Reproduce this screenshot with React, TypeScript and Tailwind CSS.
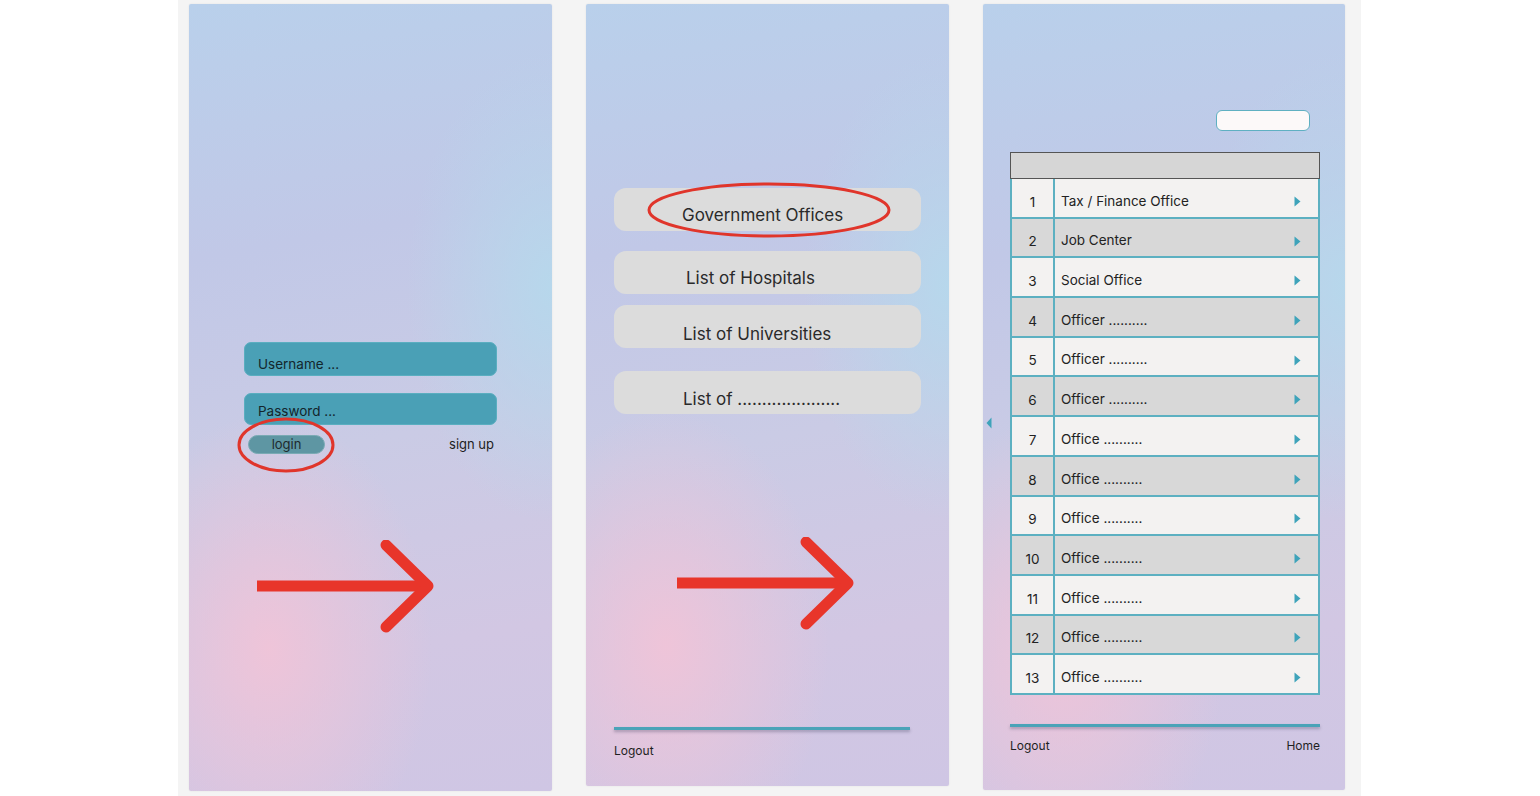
import React from "react";

const panelBg =
  "bg-[radial-gradient(ellipse_45%_30%_at_22%_82%,rgba(240,196,216,0.95),rgba(240,196,216,0)_100%),radial-gradient(ellipse_40%_30%_at_100%_36%,rgba(182,216,236,0.95),rgba(182,216,236,0)_100%),linear-gradient(170deg,#b9d0eb_0%,#c1c8e7_30%,#cacbe5_55%,#d2c7e3_80%,#cfc6e4_100%)]";

function Arrow({ className }: { className: string }) {
  return (
    <svg className={className} width="190" height="100" viewBox="0 0 190 100">
      <line x1="0" y1="46" x2="172" y2="46" stroke="#e8352a" strokeWidth="11" />
      <polyline
        points="129,5 171,46 129,87"
        fill="none"
        stroke="#e8352a"
        strokeWidth="11"
        strokeLinecap="round"
        strokeLinejoin="round"
      />
    </svg>
  );
}

function RightTri() {
  return (
    <svg width="7" height="11" viewBox="0 0 7 11">
      <path d="M0.5 0.5 L6.5 5.5 L0.5 10.5 Z" fill="#3ea3ba" />
    </svg>
  );
}

const rows = [
  "Tax / Finance Office",
  "Job Center",
  "Social Office",
  "Officer ..........",
  "Officer ..........",
  "Officer ..........",
  "Office ..........",
  "Office ..........",
  "Office ..........",
  "Office ..........",
  "Office ..........",
  "Office ..........",
  "Office ..........",
];

export default function App() {
  return (
    <div
      className="w-[1540px] h-[796px] bg-white flex overflow-hidden text-[#222]"
      style={{ fontFamily: "Inter, 'Liberation Sans', sans-serif" }}
    >
      <div className="ml-[178px] w-[1183px] h-[796px] bg-[#f4f4f4] flex items-start pl-[11px] pt-[4px] gap-[34px]">
        {/* Panel 1 */}
        <div className={`relative w-[363px] h-[787px] rounded-[2px] shadow-[0_0_2px_rgba(0,0,0,0.08)] ${panelBg}`}>
          <div className="ml-[55px] mt-[338px] w-[253px] flex flex-col">
            <div className="h-[34px] rounded-[7px] bg-[#4aa0b6] border border-[#5aaec0] flex items-end pb-[1px] pl-[13px] text-[13.5px] text-[#13262c]">
              Username ...
            </div>
            <div className="mt-[17px] h-[32px] rounded-[7px] bg-[#4aa0b6] border border-[#5aaec0] flex items-end pb-[3px] pl-[13px] text-[13.5px] text-[#13262c]">
              Password ...
            </div>
            <div className="mt-[10px] flex items-center justify-between">
              <div className="ml-[4px] w-[77px] h-[19px] rounded-full bg-[#5e96a3] border border-[#7aaab4] flex items-center justify-center text-[13px] text-[#1d2a2e]">
                login
              </div>
              <span className="mr-[3px] text-[13px] text-[#1d1d1d]">sign up</span>
            </div>
          </div>
          <svg className="absolute left-[47px] top-[413px]" width="100" height="60" viewBox="0 0 100 60">
            <ellipse cx="50" cy="28" rx="47" ry="26" fill="none" stroke="#e0352b" strokeWidth="3" />
          </svg>
          <Arrow className="absolute left-[68px] top-[536px]" />
        </div>

        {/* Panel 2 */}
        <div className={`relative w-[363px] h-[782px] rounded-[2px] shadow-[0_0_2px_rgba(0,0,0,0.08)] flex flex-col ${panelBg}`}>
          <div className="ml-[28px] mt-[184px] w-[307px] flex flex-col text-[17px] text-[#2a2a2a]">
            <div className="h-[43px] rounded-[12px] bg-[#dcdcdc] flex items-center pl-[68px] pt-[12px]">
              Government Offices
            </div>
            <div className="mt-[20px] h-[43px] rounded-[12px] bg-[#dcdcdc] flex items-center pl-[72px] pt-[12px]">
              List of Hospitals
            </div>
            <div className="mt-[11px] h-[43px] rounded-[12px] bg-[#dcdcdc] flex items-center pl-[69px] pt-[16px]">
              List of Universities
            </div>
            <div className="mt-[23px] h-[43px] rounded-[12px] bg-[#dcdcdc] flex items-center pl-[69px] pt-[15px]">
              List of .....................
            </div>
          </div>
          <div className="mt-auto mb-[26px] ml-[28px] w-[296px] flex flex-col">
            <div className="h-[3px] bg-[#4aa3b8] shadow-[0_2px_3px_rgba(60,60,90,0.35)]" />
            <span className="mt-[12px] text-[12px] text-[#1f1f1f]">Logout</span>
          </div>
          <svg className="absolute left-[60px] top-[177px]" width="250" height="60" viewBox="0 0 250 60">
            <ellipse cx="123" cy="29" rx="120" ry="26" fill="none" stroke="#e0352b" strokeWidth="3" />
          </svg>
          <Arrow className="absolute left-[91px] top-[533px]" />
        </div>

        {/* Panel 3 */}
        <div className={`relative w-[362px] h-[786px] rounded-[2px] shadow-[0_0_2px_rgba(0,0,0,0.08)] flex flex-col ${panelBg}`}>
          <div className="mt-[106px] self-end mr-[35px] w-[94px] h-[21px] rounded-[6px] bg-[#fcf9f9] border border-[#5fb0c2]" />
          <div className="relative flex items-center mt-[21px]">
            <svg className="ml-[3px] mr-[18px]" width="6" height="12" viewBox="0 0 6 12">
              <path d="M5.5 0.5 L0.5 6 L5.5 11.5 Z" fill="#3ea3ba" />
            </svg>
            <div className="w-[310px] flex flex-col">
              <div className="h-[27px] bg-[#d6d6d6] border-[1.5px] border-[#555]" />
              {rows.map((r, i) => (
                <div
                  key={i}
                  className={`h-[39.7px] flex border-x-2 border-b-2 border-[#5cb0c1] text-[13.5px] text-[#222] ${
                    i % 2 === 0 ? "bg-[#f3f2f1]" : "bg-[#d8d8d8]"
                  }`}
                >
                  <div className="w-[43px] border-r-2 border-[#5cb0c1] flex items-center justify-center pt-[8px]">
                    {i + 1}
                  </div>
                  <div className="flex-1 flex items-center pl-[6px] pr-[17px] pt-[6px]">
                    <span className="flex-1">{r}</span>
                    <span className="pt-[1px]">
                      <RightTri />
                    </span>
                  </div>
                </div>
              ))}
            </div>
          </div>
          <div className="mt-auto mb-[35px] ml-[27px] w-[310px] flex flex-col">
            <div className="h-[3px] bg-[#4aa3b8] shadow-[0_2px_3px_rgba(60,60,90,0.35)]" />
            <div className="mt-[10px] flex justify-between text-[12px] text-[#1f1f1f]">
              <span>Logout</span>
              <span>Home</span>
            </div>
          </div>
        </div>
      </div>
    </div>
  );
}
